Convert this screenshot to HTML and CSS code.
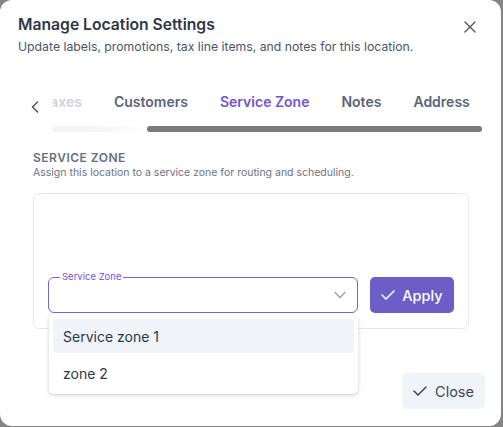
FILE: index.html
```html
<!DOCTYPE html>
<html>
<head>
<meta charset="utf-8">
<link rel="stylesheet" href="styles.css">
</head>
<body>
<div class="modal">
  <div class="header">
    <div class="titles">
      <h1 class="title">Manage Location Settings</h1>
      <p class="subtitle">Update labels, promotions, tax line items, and notes for this location.</p>
    </div>
    <button class="close-x" aria-label="Close">
      <svg width="12" height="12" viewBox="0 0 12 12"><path d="M1 1L11 11M11 1L1 11" stroke="#4a5568" stroke-width="1.4" stroke-linecap="round"/></svg>
    </button>
  </div>

  <div class="tabs-area">
    <div class="tabs-row">
      <button class="tab-prev" aria-label="Previous">
        <svg width="8" height="12" viewBox="0 0 8 12"><path d="M6.5 1L1.5 6L6.5 11" fill="none" stroke="#4a5568" stroke-width="1.5" stroke-linecap="round" stroke-linejoin="round"/></svg>
      </button>
      <div class="tabs-viewport">
        <div class="tabs">
          <span class="tab tab-faded">Taxes</span>
          <span class="tab">Customers</span>
          <span class="tab active">Service Zone</span>
          <span class="tab">Notes</span>
          <span class="tab">Address</span>
        </div>
        <div class="scrollbar"><div class="thumb"></div></div>
      </div>
    </div>
  </div>

  <div class="section">
    <h2 class="section-title">SERVICE ZONE</h2>
    <p class="section-desc">Assign this location to a service zone for routing and scheduling.</p>
    <div class="card">
      <div class="field-row">
        <div class="select-wrap">
          <div class="select">
            <span class="select-label">Service Zone</span>
            <svg class="chev" width="12" height="8" viewBox="0 0 12 8"><path d="M1 1.5L6 6.5L11 1.5" fill="none" stroke="#94a3b8" stroke-width="1.4" stroke-linecap="round" stroke-linejoin="round"/></svg>
          </div>
          <div class="dropdown">
            <div class="option hovered">Service zone 1</div>
            <div class="option">zone 2</div>
          </div>
        </div>
        <button class="btn-apply">
          <svg width="14" height="10" viewBox="0 0 14 10"><path d="M1 5L5 9L13 1" fill="none" stroke="#fff" stroke-width="1.5" stroke-linecap="round" stroke-linejoin="round"/></svg>
          Apply
        </button>
      </div>
    </div>
  </div>

  <div class="footer">
    <button class="btn-close">
      <svg width="14" height="10" viewBox="0 0 14 10"><path d="M1 5L5 9L13 1" fill="none" stroke="#3d4756" stroke-width="1.5" stroke-linecap="round" stroke-linejoin="round"/></svg>
      Close
    </button>
  </div>
</div>
</body>
</html>
```

FILE: styles.css
```css
* { box-sizing: border-box; }
html, body { margin: 0; padding: 0; }
body {
  background: #858585;
  font-family: Inter, "Noto Sans", sans-serif;
  width: 503px;
  height: 427px;
  overflow: hidden;
}
button { font-family: inherit; border: 0; background: none; padding: 0; cursor: pointer; }

.modal {
  width: 501px;
  height: 426px;
  background: #fff;
  border-radius: 12px;
  padding: 15px 18px 0 18px;
  display: flex;
  flex-direction: column;
}

.header {
  display: flex;
  justify-content: space-between;
  align-items: flex-start;
}
.title {
  margin: 0;
  font-size: 15.7px;
  font-weight: 600;
  color: #2d3748;
  line-height: 20px;
}
.subtitle {
  margin: 4px 0 0;
  font-size: 12.25px;
  color: #4a5568;
  line-height: 16px;
}
.close-x {
  margin-top: 6px;
  margin-right: 7px;
  width: 12px;
  height: 12px;
  display: flex;
}

.tabs-area {
  margin-top: 33px;
  padding-left: 10px;
}
.tabs-row {
  display: flex;
  align-items: flex-start;
}
.tab-prev {
  width: 25px;
  height: 30px;
  display: flex;
  align-items: center;
  justify-content: flex-start;
  padding-left: 3px;
  margin-top: 4px;
}
.tabs-viewport {
  width: 429px;
  overflow: hidden;
}
.tabs {
  display: flex;
  margin-left: -27px;
  height: 26px;
  align-items: center;
  white-space: nowrap;
}
.tab {
  padding: 0 16px;
  font-size: 14px;
  font-weight: 600;
  color: #5a6478;
}
.tab-faded { color: #cdd3dc; }
.tab.active { color: #7353d6; }

.scrollbar {
  margin-top: 12px;
  height: 6px;
  display: flex;
  background: linear-gradient(90deg, #f4f4f4 0%, #f4f4f4 40%, #ffffff 100%);
  background-size: 94px 6px;
  background-repeat: no-repeat;
}
.thumb {
  margin-left: 94px;
  flex: 1;
  background: #7a7a7a;
  border-radius: 3px;
}

.section {
  padding: 0 14px 0 15px;
  margin-top: 19px;
}
.section-title {
  margin: 0;
  font-size: 12px;
  font-weight: 600;
  color: #667085;
  letter-spacing: 0.5px;
  line-height: 14px;
}
.section-desc {
  margin: 1px 0 0;
  font-size: 10.5px;
  color: #6b7280;
  line-height: 13px;
}
.card {
  margin-top: 14px;
  height: 136px;
  border: 1px solid #e4e8f0;
  border-radius: 6px;
  padding: 83px 14px 0 14px;
}
.field-row {
  display: flex;
  gap: 12px;
}
.select-wrap {
  position: relative;
  width: 310px;
}
.select {
  position: relative;
  height: 36px;
  border: 1px solid #7a62cc;
  border-radius: 6px;
  display: flex;
  align-items: center;
  justify-content: flex-end;
  padding-right: 11px;
}
.select-label {
  position: absolute;
  top: -7px;
  left: 11px;
  background: #fff;
  padding: 0 2px;
  font-size: 9.5px;
  line-height: 12px;
  color: #7353d6;
}
.chev { display: block; }
.dropdown {
  position: absolute;
  top: 38px;
  left: 1px;
  width: 309px;
  background: #fff;
  border-radius: 5px;
  box-shadow: 0 1px 3px rgba(0,0,0,0.14), 0 2px 6px rgba(0,0,0,0.08);
  padding: 4px;
  z-index: 5;
}
.option {
  height: 34px;
  border-radius: 4px;
  padding-left: 10px;
  display: flex;
  align-items: center;
  font-size: 14px;
  color: #2d3748;
}
.option + .option { margin-top: 3px; }
.option.hovered { background: #f0f3f8; }

.btn-apply {
  width: 84px;
  height: 36px;
  background: #6c5ec6;
  border-radius: 5px;
  color: #fff;
  font-size: 14.5px;
  font-weight: 500;
  display: flex;
  align-items: center;
  justify-content: center;
  gap: 7px;
}

.footer {
  margin-top: auto;
  margin-bottom: 17px;
  display: flex;
  justify-content: flex-end;
  margin-right: -2px;
}
.btn-close {
  width: 83px;
  height: 36px;
  background: #f0f3f8;
  border-radius: 6px;
  color: #3d4756;
  font-size: 14.5px;
  display: flex;
  align-items: center;
  justify-content: center;
  gap: 8px;
}
```
